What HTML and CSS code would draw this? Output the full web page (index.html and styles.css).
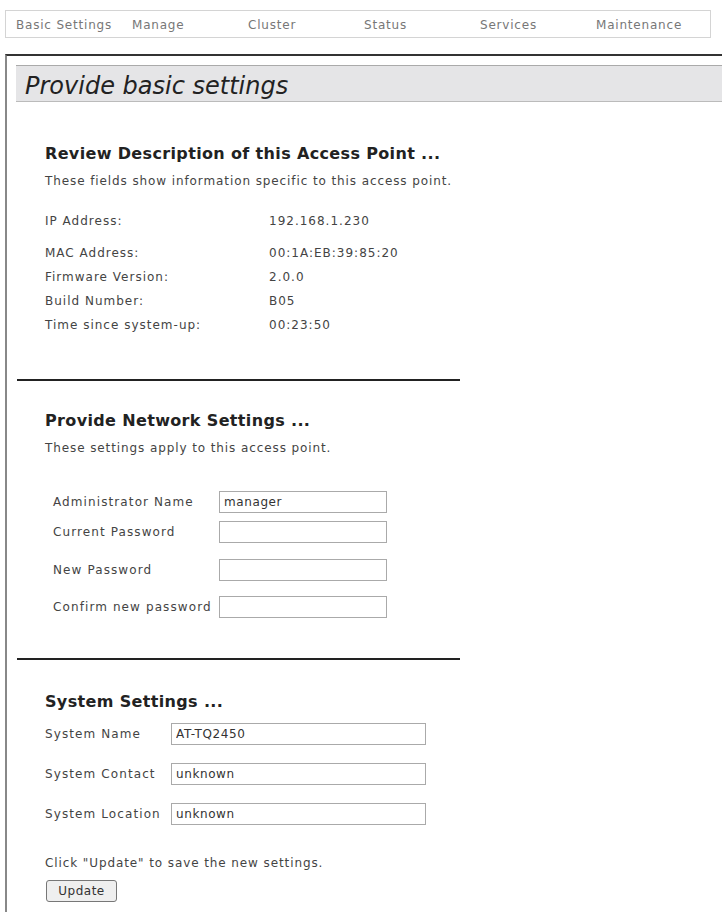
FILE: index.html
```html
<!DOCTYPE html>
<html lang="en">
	<head>
		<meta charset="UTF-8" />
		<meta name="viewport" content="width=device-width, initial-scale=1.0" />
		<title>Basic Settings</title>
		<link rel="stylesheet" href="styles.css">
	</head>
	<body>
		<div class="nav">
			<a class="nav-item" href="#">Basic Settings</a>
			<a class="nav-item" href="#">Manage</a>
			<a class="nav-item" href="#">Cluster</a>
			<a class="nav-item" href="#">Status</a>
			<a class="nav-item" href="#">Services</a>
			<a class="nav-item" href="#">Maintenance</a>
		</div>

		<div class="panel">
			<div class="page-title">Provide basic settings</div>

			<div class="section first">
				<h2 class="section-title">Review Description of this Access Point ...</h2>
				<p class="section-desc">These fields show information specific to this access point.</p>
				<div class="info">
					<div class="info-row tall"><span class="info-label">IP Address:</span><span>192.168.1.230</span></div>
					<div class="info-row"><span class="info-label">MAC Address:</span><span>00:1A:EB:39:85:20</span></div>
					<div class="info-row"><span class="info-label">Firmware Version:</span><span>2.0.0</span></div>
					<div class="info-row"><span class="info-label">Build Number:</span><span>B05</span></div>
					<div class="info-row"><span class="info-label">Time since system-up:</span><span>00:23:50</span></div>
				</div>
			</div>

			<hr class="divider">

			<div class="section">
				<h2 class="section-title">Provide Network Settings ...</h2>
				<p class="section-desc">These settings apply to this access point.</p>
				<div class="form network">
					<label class="form-row near">Administrator Name <input type="text" value="manager"></label>
					<label class="form-row">Current Password <input type="password"></label>
					<label class="form-row">New Password <input type="password"></label>
					<label class="form-row">Confirm new password <input type="password"></label>
				</div>
			</div>

			<hr class="divider second">

			<div class="section">
				<h2 class="section-title">System Settings ...</h2>
				<div class="form system">
					<label class="form-row">System Name <input type="text" value="AT-TQ2450"></label>
					<label class="form-row">System Contact <input type="text" value="unknown"></label>
					<label class="form-row">System Location <input type="text" value="unknown"></label>
				</div>
				<p class="hint">Click "Update" to save the new settings.</p>
				<button class="btn">Update</button>
			</div>
		</div>
	</body>
</html>
```

FILE: styles.css
```css
body {
	margin: 0;
	background-color: #fff;
	font-family: "DejaVu Sans", Verdana, sans-serif;
	color: #444;
}

/* top menu */
.nav {
	display: grid;
	grid-template-columns: repeat(6, 116px);
	align-items: center;
	width: 706px;
	height: 28px;
	margin: 10px 0 0 5px;
	padding: 2px 0 0 10px;
	border: 1px solid #d4d4d4;
	box-sizing: border-box;
}

.nav-item {
	font-size: 12px;
	letter-spacing: 0.8px;
	color: #777;
	text-decoration: none;
}

.panel {
	margin: 16px 4px 0 5px;
	padding: 9px 0 8px 9px;
	border-top: 2px solid #333;
	border-left: 2px solid #888;
	min-height: 840px;
}

.page-title {
	height: 35px;
	line-height: 40px;
	padding-left: 9px;
	background-color: #e5e5e7;
	border-top: 1px solid #aaa;
	border-bottom: 1px solid #bbb;
	font-size: 24px;
	font-style: italic;
	color: #222;
}

.section {
	padding-left: 29px;
}

.section.first {
	padding-top: 43px;
}

.section-title {
	margin: 0;
	font-size: 16px;
	line-height: 18px;
	font-weight: bold;
	letter-spacing: 0.35px;
	color: #222;
}

.section-desc {
	margin: 11px 0 0;
	font-size: 12px;
	line-height: 14px;
	letter-spacing: 0.9px;
	color: #444;
}

.info {
	margin-top: 22px;
}

.info-row {
	display: flex;
	height: 24px;
	align-items: center;
	font-size: 12px;
	letter-spacing: 1px;
}

.info-row.tall {
	height: 31px;
	align-items: flex-start;
	padding-top: 4px;
	box-sizing: border-box;
}

.info-label {
	width: 224px;
}

.divider {
	width: 443px;
	height: 0;
	margin: 42px 0 31px 1px;
	border: 0;
	border-top: 2px solid #222;
}

.divider.second {
	margin-top: 40px;
	margin-bottom: 33px;
}

.form {
	display: flex;
	flex-direction: column;
}

.form-row {
	display: flex;
	align-items: center;
	height: 22px;
	font-size: 12px;
	letter-spacing: 1.1px;
	color: #444;
}

.form input {
	height: 22px;
	margin: 0;
	padding: 0 4px;
	box-sizing: border-box;
	border: 1px solid #aaa;
	border-radius: 0;
	font-family: inherit;
	font-size: 12px;
	letter-spacing: 0.6px;
	color: #333;
	background-color: #fff;
}

.network {
	margin: 36px 0 0 8px;
	gap: 16px;
}

.network .form-row.near {
	margin-bottom: -8px;
}

.network .form-row:last-child {
	margin-top: -1px;
}

.network .form-row {
	justify-content: space-between;
	width: 334px;
}

.network input {
	width: 168px;
}

.system {
	margin-top: 12px;
	gap: 18px;
}

.system .form-row {
	justify-content: space-between;
	width: 381px;
}

.system input {
	width: 255px;
}

.hint {
	margin: 31px 0 0;
	font-size: 12px;
	line-height: 14px;
	letter-spacing: 0.9px;
	color: #444;
}

.btn {
	display: block;
	width: 71px;
	height: 22px;
	margin: 10px 0 0 1px;
	padding: 0;
	border: 1px solid #777;
	border-radius: 3px;
	background-color: #efefef;
	font-family: inherit;
	font-size: 12px;
	letter-spacing: 0.5px;
	color: #333;
}
```
